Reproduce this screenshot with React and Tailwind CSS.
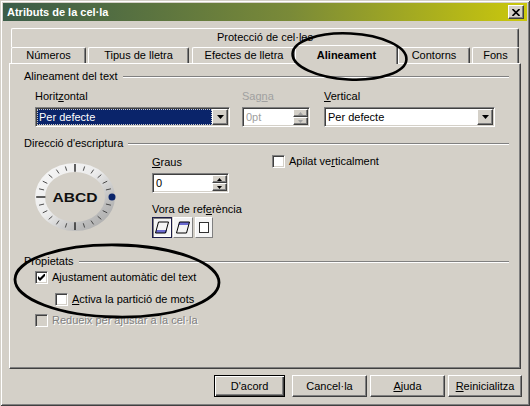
import React from "react";

const raised =
  "border border-t-white border-l-white border-r-[#404040] border-b-[#404040] shadow-[inset_-1px_-1px_#808080]";
const sunken =
  "border border-t-[#808080] border-l-[#808080] border-r-white border-b-white shadow-[inset_1px_1px_#404040,inset_-1px_-1px_#d4d0c8]";

function U({ children }) {
  return <span className="underline decoration-1 underline-offset-[1px]">{children}</span>;
}

function Header({ children, className = "" }) {
  return (
    <div className={`flex items-center h-[13px] ${className}`}>
      <span className="whitespace-nowrap">{children}</span>
      <div className="flex-1 ml-[5px] h-[2px] border-t border-t-[#808080] border-b border-b-white" />
    </div>
  );
}

function DownTri({ color = "#000" }) {
  return (
    <svg width="7" height="4" viewBox="0 0 7 4">
      <polygon points="0,0 7,0 3.5,4" fill={color} />
    </svg>
  );
}

function SmallTri({ up, color }) {
  return (
    <svg width="5" height="3" viewBox="0 0 5 3">
      <polygon points={up ? "2.5,0 5,3 0,3" : "0,0 5,0 2.5,3"} fill={color} />
    </svg>
  );
}

function Select({ selected, className = "" }) {
  return (
    <div className={`h-[20px] ${sunken} bg-white flex p-[1px] ${className}`}>
      {selected ? (
        <div className="flex-1 h-full bg-[#0a246a] text-white border border-dotted border-[#c8c8c8] pl-[1px] leading-[14px] whitespace-nowrap">
          Per defecte
        </div>
      ) : (
        <div className="flex-1 h-full pl-[2px] leading-[16px] whitespace-nowrap">Per defecte</div>
      )}
      <div className={`w-[16px] h-[16px] bg-[#d4d0c8] ${raised} flex items-center justify-center`}>
        <DownTri />
      </div>
    </div>
  );
}

function Spin({ value, disabled, className = "" }) {
  const c = disabled ? "#a0a0a0" : "#000";
  return (
    <div className={`h-[20px] ${sunken} bg-white flex p-[1px] ${className}`}>
      <div className={`flex-1 h-full pl-[2px] leading-[16px] ${disabled ? "text-[#a0a0a0]" : "text-black"}`}>
        {value}
      </div>
      <div className="w-[15px] h-full flex flex-col">
        <div className={`h-[8px] bg-[#d4d0c8] ${raised} flex items-center justify-center`}>
          <SmallTri up color={c} />
        </div>
        <div className={`h-[8px] bg-[#d4d0c8] ${raised} flex items-center justify-center`}>
          <SmallTri color={c} />
        </div>
      </div>
    </div>
  );
}

function Check({ checked, disabled }) {
  return (
    <span
      className={`w-[13px] h-[13px] shrink-0 ${sunken} ${
        disabled ? "bg-[#d4d0c8]" : "bg-white"
      } flex items-center justify-center`}
    >
      {checked && (
        <svg width="7" height="7" viewBox="0 0 7 7">
          <polygon points="0,2 2,4 7,-1 7,2 2,7 0,5" fill="#000" />
        </svg>
      )}
    </span>
  );
}

function Dial() {
  const cx = 42;
  const cy = 36;
  const ticks = [];
  for (let i = 1; i < 24; i++) {
    const a = (i * 15 * Math.PI) / 180;
    const major = i % 6 === 0;
    const r1 = major ? 0.74 : 0.8;
    const r2 = major ? 0.97 : 0.93;
    ticks.push(
      <line
        key={i}
        x1={cx + 40 * r1 * Math.cos(a)}
        y1={cy - 34 * r1 * Math.sin(a)}
        x2={cx + 40 * r2 * Math.cos(a)}
        y2={cy - 34 * r2 * Math.sin(a)}
        stroke={major ? "#202020" : "#3a3a3a"}
        strokeWidth={major ? 1.4 : 0.9}
      />
    );
  }
  const ring =
    "M2,36 A40,34 0 1,0 82,36 A40,34 0 1,0 2,36 Z M12,36 A30,25 0 1,1 72,36 A30,25 0 1,1 12,36 Z";
  return (
    <div className="relative w-[84px] h-[72px]">
      <svg width="84" height="72" viewBox="0 0 84 72" className="absolute left-0 top-0">
        <defs>
          <linearGradient id="rg" x1="0" y1="0" x2="1" y2="1">
            <stop offset="0" stopColor="#f8f8f8" />
            <stop offset="0.45" stopColor="#ececec" />
            <stop offset="0.75" stopColor="#bcbcbc" />
            <stop offset="1" stopColor="#a4a4a4" />
          </linearGradient>
        </defs>
        <path d={ring} fill="url(#rg)" fillRule="evenodd" />
        {ticks}
        <circle cx="79" cy="36" r="3.5" fill="#0a246a" />
      </svg>
      <span className="absolute left-0 top-[29px] w-[84px] text-center font-bold text-[13px] leading-[15px] scale-x-[1.2] text-[#111]">
        ABCD
      </span>
    </div>
  );
}

function ParaIcon({ band }) {
  return (
    <svg width="14" height="13" viewBox="0 0 14 13">
      {band === "bottom" && <polygon points="1.5,9 12,9 11,12 0.5,12" fill="#6a6ad0" />}
      {band === "top" && <polygon points="3.5,1 13.5,1 12.5,4 2.5,4" fill="#6a6ad0" />}
      <polygon points="3.5,1 13.5,1 10.5,12 0.5,12" fill="none" stroke="#000" strokeWidth="1" />
    </svg>
  );
}

const tabBase =
  "border-t border-l border-white border-r border-r-[#404040] shadow-[inset_-1px_0_#808080] rounded-t-[2px] text-center bg-[#d4d0c8] whitespace-nowrap";

export default function App() {
  return (
    <div className="relative w-[530px] h-[406px] bg-[#d4d0c8] p-[3px] text-[11px] leading-[13px] text-black font-['Liberation_Sans',Arial,sans-serif] shadow-[inset_1px_1px_#d4d0c8,inset_-1px_-1px_#404040,inset_2px_2px_white,inset_-2px_-2px_#808080]">
      {/* Title bar */}
      <div className="h-[18px] flex items-center justify-between pl-[4px] pr-[3px] bg-[linear-gradient(to_right,#3a5c48,#7a8a38_55%,#cbc80c)]">
        <span className="text-white font-bold">Atributs de la cel·la</span>
        <div className={`w-[16px] h-[14px] bg-[#d4d0c8] ${raised} flex items-center justify-center`}>
          <svg width="8" height="7" viewBox="0 0 8 7">
            <path d="M0.5 0 L7.5 7 M7.5 0 L0.5 7" stroke="#000" strokeWidth="1.6" />
          </svg>
        </div>
      </div>

      {/* Tabs */}
      <div className="mt-[7px] ml-[8px] w-[508px] h-[19px] pt-[2px] border-t border-l border-white border-r border-r-[#404040] shadow-[inset_-1px_0_#808080] rounded-t-[2px] text-center">
        Protecció de cel·les
      </div>
      <div className="relative z-10 ml-[8px] h-[16px] flex items-end">
        <div className={`${tabBase} w-[75px] h-[16px] pt-[1px]`}>Números</div>
        <div className={`${tabBase} ml-[2px] w-[101px] h-[16px] pt-[1px]`}>Tipus de lletra</div>
        <div className={`${tabBase} ml-[3px] w-[104px] h-[16px] pt-[1px]`}>Efectes de lletra</div>
        <div className={`${tabBase} ml-[-1px] w-[103px] h-[19px] mb-[-1px] pt-[3px] font-bold`}>
          Alineament
        </div>
        <div className={`${tabBase} w-[72px] h-[16px] pt-[1px]`}>Contorns</div>
        <div className={`${tabBase} ml-[2px] w-[47px] h-[16px] pt-[1px]`}>Fons</div>
      </div>

      {/* Panel */}
      <div
        className={`ml-[6px] w-[512px] h-[306px] border border-t-white border-l-white border-r-[#404040] border-b-[#404040] shadow-[inset_-1px_-1px_#808080] pl-[14px] pr-[11px] pt-[6px]`}
      >
        <Header>Alineament del text</Header>
        <div className="flex ml-[11px] mt-[7px]">
          <div className="w-[195px]">
            <div className="h-[13px]">
              Horit<U>z</U>ontal
            </div>
            <Select selected className="mt-[4px]" />
          </div>
          <div className="ml-[12px] w-[68px]">
            <div className="h-[13px] text-[#a0a0a0]">
              Sag<U>n</U>a
            </div>
            <Spin value="0pt" disabled className="mt-[4px]" />
          </div>
          <div className="ml-[14px] w-[171px]">
            <div className="h-[13px]">
              <U>V</U>ertical
            </div>
            <Select className="mt-[4px]" />
          </div>
        </div>

        <Header className="mt-[10px]">Direcció d'escriptura</Header>
        <div className="flex">
          <div className="ml-[9px] mt-[11px]">
            <Dial />
          </div>
          <div className="ml-[35px] w-[77px] mt-[6px]">
            <div className="h-[13px]">
              <U>G</U>raus
            </div>
            <Spin value="0" className="mt-[4px]" />
            <div className="h-[13px] mt-[10px] whitespace-nowrap">
              Vora de ref<U>e</U>rència
            </div>
            <div className="flex mt-[1px] items-start">
              <div className="w-[20px] h-[21px] border border-[#1c1c48] shadow-[inset_1px_1px_#808080,inset_-1px_-1px_white] bg-[#f4f4f4] flex items-center justify-center">
                <ParaIcon band="bottom" />
              </div>
              <div className="ml-[1px] w-[20px] h-[21px] border border-t-white border-l-white border-r-[#808080] border-b-[#808080] bg-[#f4f4f4] flex items-center justify-center">
                <ParaIcon band="top" />
              </div>
              <div className="ml-[2px] w-[18px] h-[21px] border border-t-white border-l-white border-r-[#808080] border-b-[#808080] bg-[#f4f4f4] flex items-center justify-center">
                <span className="w-[10px] h-[11px] border border-[#303030] bg-white" />
              </div>
            </div>
          </div>
          <div className="ml-[43px] mt-[5px] flex items-center h-[13px] gap-[4px]">
            <Check />
            <span>
              Apilat ve<U>r</U>ticalment
            </span>
          </div>
        </div>

        <Header className="mt-[17px]">Propietats</Header>
        <div className="ml-[11px] mt-[3px] flex items-center h-[13px] gap-[4px]">
          <Check checked />
          <span>
            A<U>j</U>ustament automàtic del text
          </span>
        </div>
        <div className="ml-[31px] mt-[9px] flex items-center h-[13px] gap-[4px]">
          <Check />
          <span>
            <U>A</U>ctiva la partició de mots
          </span>
        </div>
        <div className="ml-[11px] mt-[8px] flex items-center h-[13px] gap-[4px]">
          <Check disabled />
          <span className="text-[#808080] [text-shadow:1px_1px_0_#fff]">Redueix per ajustar a la cel·la</span>
        </div>
      </div>

      {/* Buttons */}
      <div className="flex justify-end mt-[6px] mr-[5px]">
        <button className={`w-[71px] h-[22px] bg-[#d4d0c8] border border-[#000] shadow-[inset_1px_1px_white,inset_-1px_-1px_#404040,inset_-2px_-2px_#808080]`}>
          D'acord
        </button>
        <button className={`ml-[7px] w-[75px] h-[22px] bg-[#d4d0c8] ${raised}`}>Cancel·la</button>
        <button className={`ml-[3px] w-[75px] h-[22px] bg-[#d4d0c8] ${raised}`}>
          <U>A</U>juda
        </button>
        <button className={`ml-[3px] w-[74px] h-[22px] bg-[#d4d0c8] ${raised}`}>
          <U>R</U>einicialitza
        </button>
      </div>

      {/* Hand-drawn annotation ellipses */}
      <svg
        className="absolute left-0 top-0 pointer-events-none z-20"
        width="530"
        height="406"
        viewBox="0 0 530 406"
      >
        <ellipse cx="349.5" cy="56.5" rx="57" ry="23" fill="none" stroke="#000" strokeWidth="2.6" transform="rotate(3 349.5 56.5)" />
        <ellipse cx="117" cy="281" rx="102" ry="36" fill="none" stroke="#000" strokeWidth="2.8" transform="rotate(1 117 281)" />
      </svg>
    </div>
  );
}
